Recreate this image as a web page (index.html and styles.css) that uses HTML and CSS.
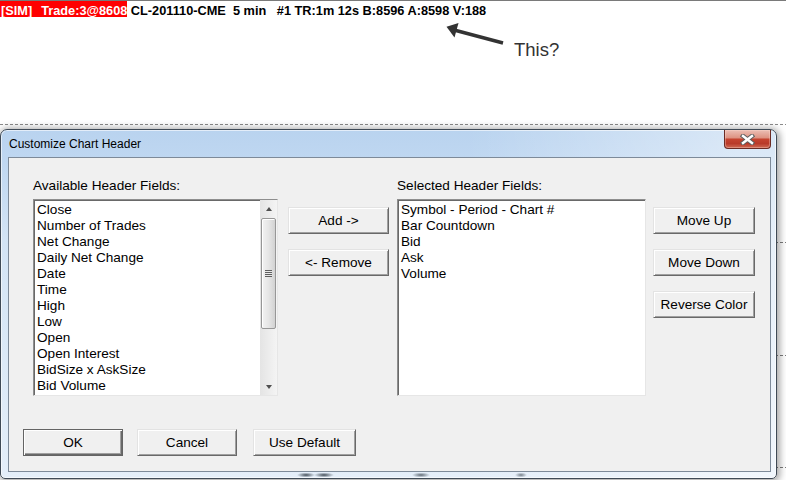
FILE: index.html
```html
<!DOCTYPE html>
<html lang="en">
<head>
  <meta charset="UTF-8">
  <title>Customize Chart Header</title>
  <link rel="stylesheet" href="styles.css">
</head>
<body>
  <div class="chart">
    <!-- chart header line -->
    <div class="chart-title">
      <span class="sim-tag">[SIM]<b class="trade">Trade:3@8608</b></span>
      <span class="symbol"> CL-201110-CME  5 min   #1 TR:1m 12s B:8596 A:8598 V:188</span>
    </div>

    <!-- hand drawn note -->
    <div class="note">
      <svg class="note-arrow" width="62" height="24" viewBox="0 0 62 24">
        <line x1="10" y1="8.2" x2="58" y2="21" stroke="#333" stroke-width="3.5"/>
        <polygon points="1.5,4.7 13.5,1 9.5,15.5" fill="#333"/>
      </svg>
      <span class="note-text">This?</span>
    </div>

    <div class="plot">
      <div class="dialog">
        <div class="title-bar">
          <span class="title-text">Customize Chart Header</span>
          <button class="close-btn">
            <svg width="15" height="11" viewBox="0 0 15 11">
              <path d="M3 2 L12 9 M12 2 L3 9" stroke="#5e5e5e" stroke-width="4.4" stroke-linecap="square"/>
              <path d="M3 2 L12 9 M12 2 L3 9" stroke="#fff" stroke-width="2.4" stroke-linecap="square"/>
            </svg>
          </button>
        </div>

        <div class="client">
          <div class="fields">
            <div class="field-col left-col">
              <div class="field-label">Available Header Fields:</div>
              <div class="listbox">
                <ul class="items">
                  <li>Close</li>
                  <li>Number of Trades</li>
                  <li>Net Change</li>
                  <li>Daily Net Change</li>
                  <li>Date</li>
                  <li>Time</li>
                  <li>High</li>
                  <li>Low</li>
                  <li>Open</li>
                  <li>Open Interest</li>
                  <li>BidSize x AskSize</li>
                  <li>Bid Volume</li>
                </ul>
                <div class="scrollbar">
                  <div class="sb-btn sb-up"></div>
                  <div class="sb-track">
                    <div class="sb-thumb"><span class="sb-grip"></span></div>
                  </div>
                  <div class="sb-btn sb-down"></div>
                </div>
              </div>
            </div>

            <div class="btn-col mid-col">
              <button class="btn">Add -&gt;</button>
              <button class="btn">&lt;- Remove</button>
            </div>

            <div class="field-col right-col">
              <div class="field-label">Selected Header Fields:</div>
              <div class="listbox">
                <ul class="items">
                  <li>Symbol - Period - Chart #</li>
                  <li>Bar Countdown</li>
                  <li>Bid</li>
                  <li>Ask</li>
                  <li>Volume</li>
                </ul>
              </div>
            </div>

            <div class="btn-col side-col">
              <button class="btn">Move Up</button>
              <button class="btn">Move Down</button>
              <button class="btn">Reverse Color</button>
            </div>
          </div>

          <div class="actions">
            <button class="btn btn-default">OK</button>
            <button class="btn">Cancel</button>
            <button class="btn btn-wide">Use Default</button>
          </div>
        </div>
      </div>
    </div>
  </div>
</body>
</html>
```

FILE: styles.css
```css
body {
  margin: 0;
  width: 786px;
  height: 480px;
  overflow: hidden;
  background: #fff;
  font-family: "Liberation Sans", Arial, sans-serif;
  color: #000;
}

/* header line of the chart */
.chart-title {
  display: flex;
  height: 16px;
  border-top: 1px solid #7a7a7a;
  font-weight: bold;
  font-size: 12.75px;
  white-space: pre;
}

.sim-tag,
.symbol {
  padding-top: 3px;
  line-height: 13px;
}

.sim-tag {
  background: #ff0000;
  color: #fff;
  padding-left: 1px;
}

.sim-tag .trade {
  margin-left: 9px;
}

/* arrow note */
.note {
  display: flex;
  align-items: flex-start;
  height: 103px;
  padding-left: 445px;
}

.note-arrow {
  margin-top: 5px;
}

.note-text {
  margin: 22px 0 0 7px;
  font-size: 18.5px;
  line-height: 22px;
  color: #333;
}

/* chart body with dashed grid lines */
.plot {
  height: 360px;
  padding-top: 9px;
  box-sizing: border-box;
  background:
    repeating-linear-gradient(90deg, #8a8a8a 0 3px, transparent 3px 5px) 0 4px / 100% 1px no-repeat,
    repeating-linear-gradient(90deg, #7c7c7c 0 3px, transparent 3px 5px) 0 122px / 100% 1px no-repeat,
    repeating-linear-gradient(90deg, #7c7c7c 0 3px, transparent 3px 5px) 0 235px / 100% 1px no-repeat,
    repeating-linear-gradient(90deg, #7c7c7c 0 3px, transparent 3px 5px) 0 347px / 100% 1px no-repeat;
}

/* dialog window */
.dialog {
  box-sizing: border-box;
  width: 777px;
  height: 350px;
  display: flex;
  flex-direction: column;
  border: 1px solid #3f4a56;
  border-radius: 7px 7px 5px 5px;
  background:
    radial-gradient(9px 2.5px at 305px 345px, rgba(40, 50, 60, 0.85), transparent),
    radial-gradient(10px 2.5px at 323px 345px, rgba(40, 50, 60, 0.85), transparent),
    radial-gradient(9px 2.5px at 420px 345px, rgba(40, 50, 60, 0.7), transparent),
    radial-gradient(6px 2.5px at 520px 345px, rgba(40, 50, 60, 0.6), transparent),
    linear-gradient(90deg, rgba(255, 255, 255, 0) 60%, rgba(255, 255, 255, 0.45) 95%),
    linear-gradient(180deg, #b9d3ef 0, #bfd7f1 30px, #d3e4f5 110px, #e4eef9 100%);
  box-shadow: inset 0 0 0 1px rgba(255, 255, 255, 0.6), 1px 1px 7px 2px rgba(0, 0, 0, 0.35);
}

.title-bar {
  height: 27px;
  display: flex;
  justify-content: space-between;
  align-items: flex-start;
  padding: 0 5px 0 8px;
}

.title-text {
  margin-top: 6px;
  font-size: 12px;
  line-height: 16px;
}

.close-btn {
  box-sizing: border-box;
  width: 47px;
  height: 19px;
  padding: 0;
  display: flex;
  align-items: center;
  justify-content: center;
  border: 1px solid #6b2b24;
  border-top: none;
  border-radius: 0 0 4px 4px;
  background: linear-gradient(180deg, #ecbfb5 0%, #de9484 42%, #c5432f 52%, #b93a29 75%, #cf6a54 100%);
  box-shadow: inset 0 0 0 1px rgba(255, 220, 210, 0.35);
}

.client {
  flex: 1;
  margin: 0 5px 6px 7px;
  padding: 20px 15px 15px 14px;
  border: 1px solid #7d8a99;
  background: #f0f0f0;
  font-size: 13.6px;
}

.fields {
  display: flex;
  padding-left: 10px;
}

.field-label {
  line-height: 16px;
  margin-bottom: 5px;
  white-space: nowrap;
}

.left-col {
  width: 245px;
}

.right-col {
  width: 249px;
  margin-left: 8px;
}

.btn-col {
  display: flex;
  flex-direction: column;
  gap: 15px;
  padding-top: 29px;
}

.mid-col {
  width: 101px;
  margin-left: 10px;
}

.side-col {
  width: 102px;
  margin-left: 7px;
}

/* list boxes */
.listbox {
  box-sizing: border-box;
  height: 197px;
  display: flex;
  overflow: hidden;
  background: #fff;
  border: 1px solid;
  border-color: #8e8e8e #e6e6e6 #e6e6e6 #8e8e8e;
  box-shadow: inset 1px 1px #696969;
}

.items {
  flex: 1;
  list-style: none;
  margin: 0;
  padding: 2px 0 0 3px;
  overflow: hidden;
}

.items li {
  line-height: 16px;
  white-space: nowrap;
}

.scrollbar {
  width: 17px;
  display: flex;
  flex-direction: column;
  background: linear-gradient(90deg, #e4e4e4, #f4f4f4);
}

.sb-btn {
  height: 17px;
  display: flex;
  align-items: center;
  justify-content: center;
}

.sb-up::before,
.sb-down::before {
  content: "";
  border-left: 3.5px solid transparent;
  border-right: 3.5px solid transparent;
}

.sb-up::before {
  border-bottom: 4px solid #4f4f4f;
}

.sb-down::before {
  border-top: 4px solid #4f4f4f;
}

.sb-track {
  flex: 1;
}

.sb-thumb {
  box-sizing: border-box;
  height: 111px;
  margin: 1px 1px 0;
  display: flex;
  align-items: center;
  justify-content: center;
  border: 1px solid #979797;
  border-radius: 2px;
  background: linear-gradient(90deg, #f3f3f3, #e6e6e6 50%, #d2d2d2);
  box-shadow: inset 1px 1px #fff;
}

.sb-grip {
  width: 7px;
  height: 7px;
  background: repeating-linear-gradient(180deg, #5f5f5f 0 1px, #e8e8e8 1px 2px);
}

/* push buttons */
.btn {
  box-sizing: border-box;
  height: 27px;
  padding: 0;
  font-family: "Liberation Sans", Arial, sans-serif;
  font-size: 13.6px;
  color: #000;
  background: #f0f0f0;
  border: 1px solid;
  border-color: #e3e3e3 #696969 #696969 #e3e3e3;
  box-shadow: inset 1px 1px #fff, inset -1px -1px #a0a0a0;
}

.btn-default {
  border-color: #646464;
  box-shadow: inset 1px 1px #fff, inset -1px -1px #696969, inset -2px -2px #a0a0a0;
}

.actions {
  display: flex;
  gap: 14px;
  margin-top: 33px;
}

.actions .btn {
  width: 100px;
}

.actions .btn-wide {
  width: 103px;
  margin-left: 2px;
}
```
